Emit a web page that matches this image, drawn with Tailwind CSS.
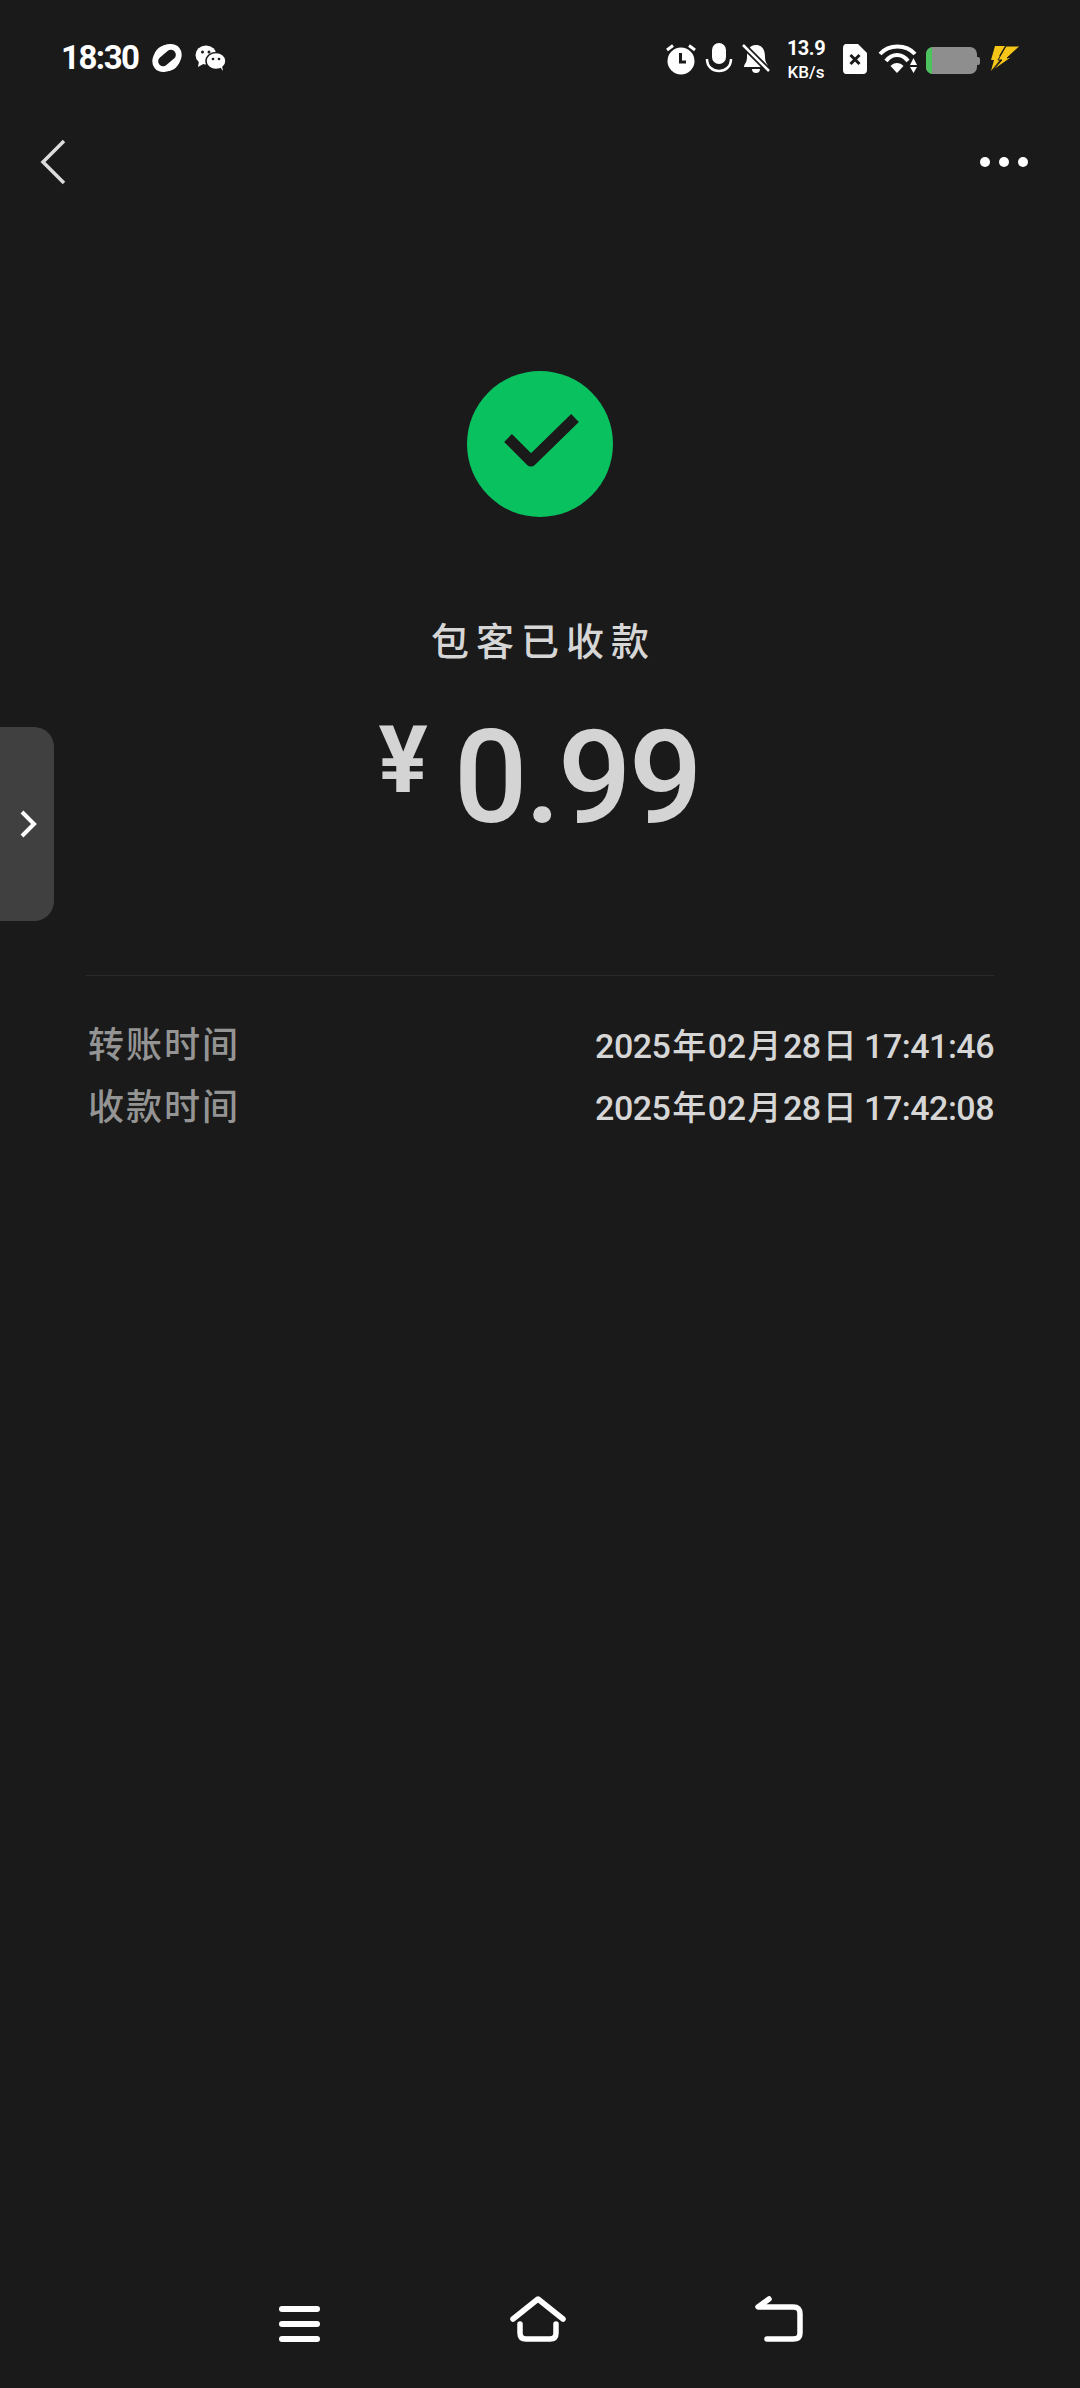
<!doctype html>
<html lang="zh">
<head>
<meta charset="utf-8">
<script src="https://cdn.jsdelivr.net/npm/@tailwindcss/browser@4"></script>
<title>转账详情</title>
</head>
<body class="bg-[#1a1a1a]">
<div class="relative w-[1080px] h-[2388px] flex flex-col bg-[#1a1a1a] font-['Roboto','Noto_Sans_CJK_SC',sans-serif] overflow-hidden">

  <!-- status bar -->
  <div class="h-[116px] flex items-start justify-between pt-[38px] pl-[61px] pr-[59px] text-white">
    <div class="flex items-center h-[40px]">
      <span class="text-[33px] leading-[40px] font-bold tracking-[-1.500px] w-[76px]">18:30</span>
      <svg width="32" height="32" viewBox="0 0 32 32" class="ml-[14px]"><ellipse cx="16" cy="16" rx="16" ry="12.500" transform="rotate(-40 16 16)" fill="#fff"/><circle cx="16" cy="16" r="13" fill="#fff"/><rect x="6" y="11" width="20" height="10" rx="5" transform="rotate(-40 16 16)" fill="#1a1a1a"/></svg>
      <svg width="32" height="28" viewBox="0 0 32 28" class="ml-[12px]"><ellipse cx="11" cy="11" rx="10.500" ry="9.500" fill="#fff"/><path d="M4 17 L3 23 L10 19Z" fill="#fff"/><ellipse cx="21" cy="17" rx="10" ry="8.500" fill="#fff" stroke="#1a1a1a" stroke-width="1.500"/><path d="M25 23 L28 27 L27 22Z" fill="#fff"/><circle cx="7.500" cy="8" r="1.500" fill="#1a1a1a"/><circle cx="14" cy="8" r="1.500" fill="#1a1a1a"/><circle cx="18" cy="15" r="1.300" fill="#1a1a1a"/><circle cx="24" cy="15" r="1.300" fill="#1a1a1a"/></svg>
    </div>
    <div class="flex items-start h-[40px]">
      <svg width="32" height="32" viewBox="0 0 32 32" class="mt-[6px]"><circle cx="16" cy="17" r="13.500" fill="#fff"/><path d="M2 6 L8 1.500 M30 6 L24 1.500" stroke="#fff" stroke-width="3"/><path d="M15.500 9 V18 H21" fill="none" stroke="#1a1a1a" stroke-width="3"/></svg>
      <svg width="28" height="32" viewBox="0 0 28 32" class="ml-[8px] mt-[5px]"><rect x="7" y="0" width="14" height="21" rx="7" fill="#fff"/><path d="M2 16 C2 24 8 28 14 28 C20 28 26 24 26 16" fill="none" stroke="#fff" stroke-width="2.500"/></svg>
      <svg width="28" height="30" viewBox="0 0 28 30" class="ml-[9px] mt-[6px]"><path d="M14 1 C21 1 23 7 23 13 C23 19 26 20 26 23 H2 C2 20 5 19 5 13 C5 7 7 1 14 1Z M10 25 H18 C18 28 16 29 14 29 C12 29 10 28 10 25Z" fill="#fff"/><path d="M0 0 L28 28" stroke="#1a1a1a" stroke-width="6"/><path d="M1 1 L27 27" stroke="#fff" stroke-width="2.500"/></svg>
      <div class="ml-[18px] w-[36px] flex flex-col items-center mt-[-1px]">
        <span class="text-[20px] leading-[22px] font-bold whitespace-nowrap tracking-[-0.500px]">13.9</span>
        <span class="text-[17px] leading-[20px] font-medium whitespace-nowrap mt-[3px]">KB/s</span>
      </div>
      <svg width="26" height="30" viewBox="0 0 26 30" class="ml-[18px] mt-[6px]"><path d="M4 0 H16 L25 9 V26 C25 28 24 30 21 30 H4 C2 30 1 28 1 26 V4 C1 2 2 0 4 0Z" fill="#fff"/><path d="M8.500 11 L17.500 20 M17.500 11 L8.500 20" stroke="#1a1a1a" stroke-width="3"/></svg>
      <svg width="40" height="30" viewBox="0 0 40 30" class="ml-[10px] mt-[6px]"><path d="M2 10 C11 0 28 0 37 10" fill="none" stroke="#fff" stroke-width="4"/><path d="M8 17 C14 9 24 9 30 17" fill="none" stroke="#fff" stroke-width="4"/><path d="M12.500 22 C16 18 22 18 25.500 22 L19 29Z" fill="#fff"/><path d="M32 21 L35.500 14 L39 21Z M32 23 H39 L35.500 29Z" fill="#fff"/></svg>
      <div class="ml-[8px] mt-[9px] flex items-center">
        <div class="w-[51px] h-[27px] rounded-[7px] bg-[#8e8e8e] overflow-hidden"><div class="w-[6px] h-full bg-[#4cc35e]"></div></div>
        <div class="w-[3px] h-[8px] rounded-r-[2px] bg-[#8e8e8e]"></div>
      </div>
      <svg width="32" height="28" viewBox="0 0 32 28" class="ml-[9px] mt-[7px]"><path d="M6 1 H16 L10 11 L15 10 L2 26 L5 15 L2 15Z" fill="#f5c518"/><path d="M17 1 H31 L18 13 L23 12 L3 26 L13 15 L9 15Z" fill="#f5c518" stroke="#1a1a1a" stroke-width="1"/></svg>
    </div>
  </div>

  <!-- top nav -->
  <div class="h-[92px] flex items-center justify-between pl-[38px] pr-[52px] shrink-0">
    <svg width="30" height="48" viewBox="0 0 30 48"><path d="M26 3 L5 24 L26 45" fill="none" stroke="#dcdcdc" stroke-width="3.500"/></svg>
    <div class="flex gap-[9px]"><i class="block w-[10px] h-[10px] rounded-full bg-white"></i><i class="block w-[10px] h-[10px] rounded-full bg-white"></i><i class="block w-[10px] h-[10px] rounded-full bg-white"></i></div>
  </div>

  <!-- result -->
  <div class="flex flex-col items-center pt-[163px] shrink-0">
    <div class="w-[146px] h-[146px] rounded-full bg-[#09c15f] flex items-center justify-center">
      <svg width="80" height="60" viewBox="0 0 80 60"><path d="M8 24 L31 47 L75 4" fill="none" stroke="#1a1a1a" stroke-width="11" stroke-linejoin="round"/></svg>
    </div>
    <div class="mt-[101px] h-[48px] leading-[48px] text-[38px] font-medium tracking-[7px] text-[#d6d6d6] pl-[7px]">包客已收款</div>
    <div class="mt-[47px] h-[130px] flex items-start text-[#d4d4d4] ml-[-2px]">
      <span class="text-[92px] leading-[100px] font-bold mr-[26px] mt-[-2px]">¥</span>
      <span class="text-[130px] leading-[130px] font-medium tracking-[-3px]">0.99</span>
    </div>
  </div>

  <!-- details -->
  <div class="mx-[86px] mt-[132px] border-t border-[#2a2a2a] pt-[40px] flex flex-col gap-[2px] shrink-0">
    <div class="h-[60px] flex items-center justify-between">
      <span class="text-[36px] font-medium tracking-[2px] text-[#949494] pl-[2px]">转账时间</span>
      <span class="text-[34px] text-[#d6d6d6] font-medium tracking-[-0.500px] whitespace-nowrap">2025<span class="mx-[2px]">年</span>02<span class="mx-[2px]">月</span>28<span class="ml-[2px]">日</span> 17:41:46</span>
    </div>
    <div class="h-[60px] flex items-center justify-between">
      <span class="text-[36px] font-medium tracking-[2px] text-[#949494] pl-[2px]">收款时间</span>
      <span class="text-[34px] text-[#d6d6d6] font-medium tracking-[-0.500px] whitespace-nowrap">2025<span class="mx-[2px]">年</span>02<span class="mx-[2px]">月</span>28<span class="ml-[2px]">日</span> 17:42:08</span>
    </div>
  </div>

  <!-- side tab -->
  <div class="absolute left-0 top-[727px] w-[54px] h-[194px] rounded-r-[20px] bg-[#404040] flex items-center justify-end pr-[15px]">
    <svg width="20" height="30" viewBox="0 0 20 30"><path d="M3 3 L15 15 L3 27" fill="none" stroke="#fff" stroke-width="4"/></svg>
  </div>

  <!-- system nav -->
  <div class="mt-auto mb-[46px] pl-[279px] pr-[277px] flex items-end justify-between h-[48px]">
    <div class="flex flex-col gap-[9px] w-[41px]"><i class="block h-[6px] rounded-full bg-white"></i><i class="block h-[6px] rounded-full bg-white"></i><i class="block h-[6px] rounded-full bg-white"></i></div>
    <svg width="56" height="46" viewBox="0 0 56 46"><path d="M3 23 L28 3 L53 23" fill="none" stroke="#fff" stroke-width="5.500" stroke-linecap="round" stroke-linejoin="round"/><path d="M10 28 V37 C10 41 12 43 16 43 H40 C44 43 46 41 46 37 V28" fill="none" stroke="#fff" stroke-width="5.500" stroke-linecap="round"/></svg>
    <svg width="48" height="46" viewBox="0 0 48 46"><path d="M14 3 L3 11 L13 11 H38 C43 11 45 13 45 18 V37 C45 41 43 43 38 43 H12" fill="none" stroke="#fff" stroke-width="5.500" stroke-linecap="round" stroke-linejoin="round"/></svg>
  </div>
</div>
</body>
</html>
